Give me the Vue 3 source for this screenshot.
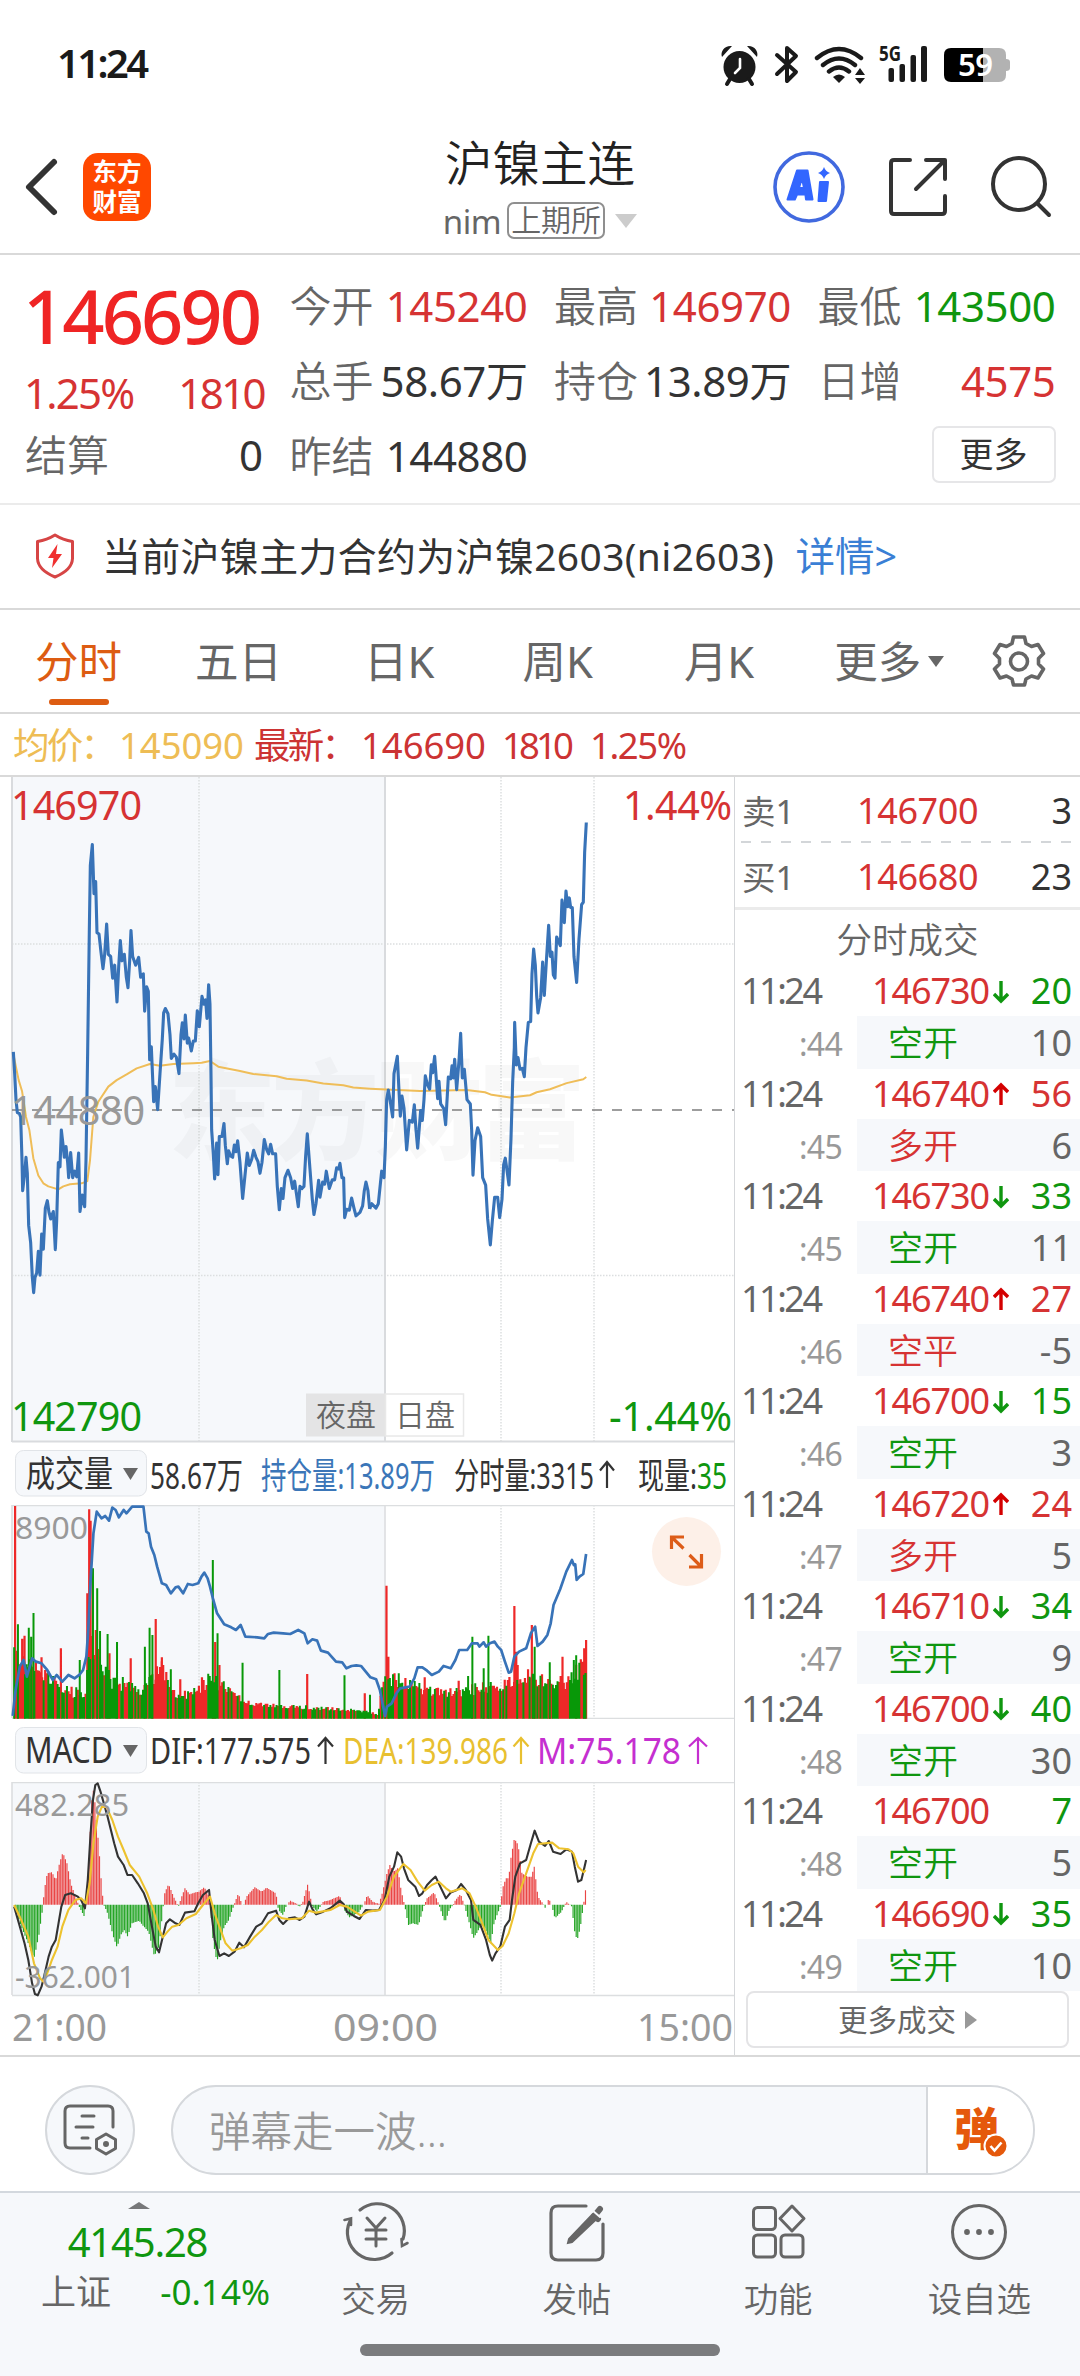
<script setup>
const quoteCols = [
  [
    { label: '今开', value: '145240', tone: 'red' },
    { label: '总手', value: '58.67万', tone: 'dark' },
    { label: '昨结', value: '144880', tone: 'dark' },
  ],
  [
    { label: '最高', value: '146970', tone: 'red' },
    { label: '持仓', value: '13.89万', tone: 'dark' },
  ],
  [
    { label: '最低', value: '143500', tone: 'green' },
    { label: '日增', value: '4575', tone: 'red' },
  ],
]

const trades = [
  { price: '146730', dir: 'down', vol: 20, sec: ':44', kind: '空开', kindTone: 'green', diff: 10 },
  { price: '146740', dir: 'up', vol: 56, sec: ':45', kind: '多开', kindTone: 'red', diff: 6 },
  { price: '146730', dir: 'down', vol: 33, sec: ':45', kind: '空开', kindTone: 'green', diff: 11 },
  { price: '146740', dir: 'up', vol: 27, sec: ':46', kind: '空平', kindTone: 'red', diff: -5 },
  { price: '146700', dir: 'down', vol: 15, sec: ':46', kind: '空开', kindTone: 'green', diff: 3 },
  { price: '146720', dir: 'up', vol: 24, sec: ':47', kind: '多开', kindTone: 'red', diff: 5 },
  { price: '146710', dir: 'down', vol: 34, sec: ':47', kind: '空开', kindTone: 'green', diff: 9 },
  { price: '146700', dir: 'down', vol: 40, sec: ':48', kind: '空开', kindTone: 'green', diff: 30 },
  { price: '146700', dir: '', vol: 7, sec: ':48', kind: '空开', kindTone: 'green', diff: 5 },
  { price: '146690', dir: 'down', vol: 35, sec: ':49', kind: '空开', kindTone: 'green', diff: 10 },
]

// night session / day session price polylines
const nightPrice = '40,650 44,700 48,760 52,790 58,792 62,800 66,900 68,970 74,930 78,893 82,930 86,1050 92,1090 97,1170 101,1205 105,1170 110,1160 115,1110 120,1165 125,1070 130,1105 136,1010 142,993 147,1020 152,1035 160,1018 166,1106 170,1040 175,905 180,915 184,830 190,870 193,893 198,868 203,905 206,940 212,882 218,940 224,925 230,938 236,883 240,1018 247,980 254,1007 258,900 263,650 268,370 271,220 277,172 282,285 287,257 291,375 297,378 303,420 309,458 314,425 320,355 325,425 332,430 338,480 344,450 351,535 356,455 361,393 366,440 373,425 379,478 384,502 389,440 393,370 398,430 407,450 416,432 422,478 430,470 434,556 440,500 445,510 449,668 454,638 461,765 466,730 473,783 480,700 487,620 491,560 496,550 504,562 510,610 514,665 522,655 529,662 537,700 543,610 547,583 552,620 556,565 562,630 566,618 574,648 580,625 586,625 592,555 598,592 606,522 612,540 617,530 621,573 626,495 630,540 633,700 635,830 640,885 644,943 650,860 654,933 658,845 666,845 672,815 676,865 682,908 686,878 692,890 698,893 703,865 708,880 713,855 720,905 728,988 735,935 742,883 748,912 755,898 761,877 768,893 774,903 780,930 786,905 793,852 800,875 806,885 812,863 818,885 827,885 832,960 838,1014 844,965 849,988 855,940 864,923 872,940 878,965 884,948 889,975 895,1007 900,960 906,965 912,960 917,890 922,839 930,920 937,990 942,1025 948,1000 956,946 960,985 968,950 974,955 979,925 988,965 997,945 1004,945 1010,917 1016,920 1020,907 1026,940 1031,940 1034,1032 1040,1013 1048,1015 1055,987 1062,1010 1068,1028 1080,1020 1088,1005 1093,970 1098,950 1104,970 1109,1012'
const dayPrice = '-1,1012 5,1000 18,1010 25,1000 35,925 42,940 46,870 50,760 55,738 62,770 68,800 72,700 82,660 87,740 91,798 96,752 102,780 110,876 118,808 127,812 133,772 138,830 143,872 152,785 157,808 162,760 166,705 172,725 179,736 184,680 188,698 194,660 203,758 207,718 212,770 221,780 227,818 235,708 242,712 246,682 250,710 254,667 260,737 267,670 272,607 277,710 283,690 291,760 301,770 305,830 309,934 315,855 323,825 332,845 338,940 347,957 353,1035 361,1095 367,1040 374,985 383,985 389,1032 396,990 401,910 406,895 417,957 423,850 428,720 433,640 434,582 439,680 444,663 450,690 457,688 463,707 468,640 475,582 482,580 486,470 491,413 496,450 500,520 504,560 512,525 518,443 523,520 530,430 536,358 541,430 546,420 550,472 555,480 560,385 571,405 576,300 583,352 588,279 593,315 598,295 602,317 607,317 612,430 620,490 627,390 635,310 640,305 644,190 649,121'
const nightAvg = '40,655 48,685 56,715 66,740 78,800 88,830 100,895 115,935 130,953 145,960 175,967 190,960 210,955 245,953 262,948 270,900 280,800 295,765 325,730 350,715 380,702 410,688 450,678 480,682 520,678 580,676 605,675 630,671 655,684 720,694 760,701 830,706 860,712 920,716 970,723 1030,727 1060,732 1110,735'
const dayAvg = '0,735 150,740 290,738 345,743 365,749 420,755 480,750 500,743 540,736 590,722 640,713 649,708'

const openInterest = '27,858 33,780 42,710 50,690 57,740 68,685 76,695 88,700 100,720 112,750 120,735 132,755 145,735 158,745 168,735 176,720 183,680 187,600 192,450 198,310 205,245 215,265 223,258 231,272 238,233 245,240 252,262 262,240 268,250 280,230 290,230 304,230 310,305 315,310 320,350 327,375 333,410 343,460 352,465 362,490 372,472 378,470 388,490 398,462 408,465 420,460 427,440 433,428 440,445 445,470 452,510 460,550 475,583 490,592 500,600 510,585 520,620 545,622 560,625 568,612 580,608 600,610 615,612 632,600 645,610 652,640 662,628 672,632 680,662 695,668 712,695 725,697 734,715 745,708 755,706 765,708 775,725 785,742 797,748 805,780 812,830 816,858 820,830 830,820 840,790 848,775 868,770 878,745 885,712 895,712 905,722 915,735 930,725 940,708 955,715 965,690 973,660 990,660 1000,640 1012,640 1016,650 1025,637 1030,650 1038,640 1048,635 1055,650 1062,660 1070,695 1078,728 1083,725 1090,680 1100,665 1115,655 1125,610 1134,590 1139,648 1150,635 1160,615 1167,580 1173,525 1187,478 1200,425 1212,390 1216,405 1219,403 1222,450 1228,440 1236,432 1242,372'

const dif = '30,590 40,640 52,700 60,750 68,820 74,852 80,856 88,830 95,790 103,740 110,710 118,690 124,640 130,590 138,555 150,550 165,560 172,570 180,595 186,510 192,370 197,270 202,225 207,220 213,245 220,280 228,320 235,360 242,400 250,440 262,465 270,495 280,495 292,520 305,550 313,580 322,650 330,710 337,727 345,680 352,640 360,628 372,640 380,645 392,608 412,604 420,580 430,555 443,540 448,610 455,690 465,738 475,730 485,738 497,725 507,698 517,712 530,680 543,650 555,640 568,610 585,602 592,630 600,642 612,625 625,622 635,630 645,620 655,575 663,600 670,613 685,605 700,595 720,572 728,582 735,605 750,618 762,627 775,600 790,602 803,600 815,570 825,500 835,470 842,427 850,440 856,475 865,510 880,530 888,558 895,550 905,525 915,510 923,500 933,530 945,565 955,548 968,540 977,522 987,540 998,570 1003,630 1018,645 1030,690 1038,735 1043,752 1050,730 1060,710 1070,650 1080,630 1085,570 1092,500 1102,460 1115,450 1125,400 1133,362 1142,395 1155,408 1163,393 1172,425 1188,432 1200,418 1212,425 1218,470 1225,515 1232,510 1238,475 1242,450'
const dea = '30,585 45,630 60,680 72,760 85,805 92,815 100,790 110,750 122,710 132,650 145,600 160,570 172,565 182,580 190,520 198,400 207,320 216,290 226,292 238,330 250,380 262,420 275,465 295,500 312,550 325,600 335,650 345,682 355,665 365,650 378,645 395,625 415,612 430,585 445,560 455,610 465,650 478,700 492,722 510,715 525,705 540,680 555,660 570,635 585,615 598,625 612,628 640,625 655,602 670,608 700,600 720,585 735,590 765,617 780,605 805,600 820,560 835,500 855,462 870,480 885,515 900,542 915,525 930,515 945,535 955,545 980,535 995,550 1008,590 1022,640 1035,690 1055,720 1065,708 1078,670 1090,610 1100,550 1115,490 1130,430 1140,402 1170,398 1185,415 1205,418 1215,430 1225,470 1237,487 1241,480'
const macdProfile = '30,584 45,650 60,700 72,745 82,680 90,600 94,540 100,490 110,487 118,510 126,460 133,428 142,460 150,520 160,560 168,590 178,618 184,560 190,400 196,228 200,260 205,340 210,420 216,540 220,584 228,610 240,680 248,712 256,675 264,660 270,680 280,640 295,632 305,650 315,665 327,738 337,710 345,600 349,550 357,522 368,560 378,590 385,560 392,535 402,553 412,548 422,545 432,532 440,545 446,590 452,700 460,757 466,700 475,650 485,630 495,588 505,550 512,580 516,590 522,560 540,532 555,545 565,533 585,550 590,600 600,615 606,590 615,572 630,582 634,592 642,575 652,523 662,590 672,605 685,575 700,570 720,558 730,600 740,622 760,608 772,580 778,556 790,575 803,582 810,550 820,490 826,465 834,485 843,475 850,540 858,590 865,645 875,640 887,645 898,590 905,565 920,547 930,584 935,605 943,638 952,600 960,585 965,570 976,552 985,590 1003,685 1012,665 1022,640 1032,670 1040,700 1047,640 1060,590 1066,530 1072,505 1078,505 1083,440 1090,385 1098,405 1106,490 1118,500 1126,500 1132,468 1140,560 1150,580 1156,595 1163,565 1170,590 1176,625 1190,605 1200,575 1212,590 1217,660 1223,692 1230,650 1236,590 1242,528'
const volProfile = '28,650 60,680 90,700 120,750 150,770 180,770 195,600 215,680 240,740 270,740 300,780 320,720 345,690 370,780 400,780 440,730 470,740 500,790 540,810 580,820 640,825 700,830 760,835 800,850 815,720 850,735 900,760 950,775 1000,760 1050,750 1100,710 1140,730 1200,740 1243,660'
const volSpikes = [
  [32, 228, 'r'], [38, 583, 'g'], [47, 626, 'r'], [52, 617, 'r'], [61, 593, 'g'], [66, 620, 'g'], [71, 549, 'g'], [88, 682, 'r'], [129, 655, 'r'], [169, 690, 'g'],
  [185, 490, 'r'], [189, 238, 'r'], [192, 272, 'r'], [197, 415, 'g'], [203, 600, 'r'], [206, 475, 'g'], [212, 603, 'g'], [228, 612, 'g'],
  [232, 670, 'r'], [248, 636, 'g'], [277, 685, 'r'], [307, 650, 'g'], [317, 593, 'g'], [323, 615, 'g'], [330, 567, 'r'], [343, 682, 'r'],
  [362, 718, 'g'], [382, 748, 'r'], [428, 742, 'r'], [451, 390, 'g'], [456, 636, 'r'], [461, 610, 'g'], [465, 705, 'r'], [514, 698, 'g'],
  [592, 720, 'g'], [651, 732, 'r'], [730, 736, 'g'], [773, 790, 'r'], [784, 794, 'g'], [819, 467, 'r'], [823, 680, 'r'], [836, 730, 'r'],
  [845, 730, 'g'], [900, 742, 'r'], [972, 752, 'r'], [992, 738, 'g'], [1001, 620, 'g'], [1025, 715, 'g'], [1035, 617, 'g'], [1090, 528, 'r'],
  [1094, 665, 'r'], [1097, 705, 'r'], [1119, 718, 'r'], [1127, 585, 'r'], [1133, 650, 'g'], [1165, 697, 'g'], [1192, 680, 'r'],
  [1216, 690, 'g'], [1221, 676, 'g'], [1238, 655, 'r'], [1242, 630, 'r'],
]

const parse = str => str.split(' ').map(p => p.split(',').map(Number))

function sample(points, x) {
  const i = points.findIndex(p => p[0] >= x)
  if (i <= 0) return points[i === 0 ? 0 : points.length - 1][1]
  const [x0, y0] = points[i - 1]
  const [x1, y1] = points[i]
  return y0 + (y1 - y0) * (x - x0) / (x1 - x0)
}

let seed = 17
function rand() {
  seed = (seed * 16807) % 2147483647
  return seed / 2147483647
}

const profile = parse(volProfile)
const volBars = { r: '', g: '' }
for (let x = 30; x <= 1244; x += 3.29) {
  const top = sample(profile, x)
  const y = top + (866 - top) * (rand() * 0.34)
  volBars[rand() > 0.45 ? 'r' : 'g'] += `M${x.toFixed(1)} 866V${y.toFixed(0)}`
}
volSpikes.forEach(([x, y, c]) => { volBars[c] += `M${x} 866V${y}` })

const macd = parse(macdProfile)
const macdBars = { r: '', g: '' }
for (let x = 30; x <= 1243; x += 3.29) {
  const y = sample(macd, x)
  macdBars[y < 584 ? 'r' : 'g'] += `M${x.toFixed(1)} 584V${y.toFixed(0)}`
}
</script>

<template>
  <div class="page">
    <div class="status">
      <span class="clock">11:24</span>
      <svg width="300" height="50" viewBox="715 40 300 50">
        <g fill="#1a1a1a">
          <circle cx="739.5" cy="67" r="16" />
          <path d="M722 57c-2-6 3-12 10-11zM757 57c2-6-3-12-10-11z" />
          <path d="M730 79l-3 5M749 79l3 5" stroke="#1a1a1a" stroke-width="4" stroke-linecap="round" />
          <path d="M740 59v9l-5 5" fill="none" stroke="#fff" stroke-width="2.6" stroke-linecap="round" />
        </g>
        <path d="M777 55l19 17-9 9V48l9 8-19 18" fill="none" stroke="#1a1a1a" stroke-width="4" stroke-linejoin="round" stroke-linecap="round" />
        <g fill="none" stroke="#1a1a1a" stroke-width="4.4" stroke-linecap="round">
          <path d="M817 58q22-18 44 0M823 65q16-13 32 0M829 71.500q10-8 20 0" />
        </g>
        <path d="M833 77q6-5 12 0l-6 6z" fill="#1a1a1a" />
        <path d="M855 75l5-7 5 7zM855 78l5 6 5-6z" fill="#1a1a1a" />
        <text class="net" x="879" y="61" textLength="22" lengthAdjust="spacingAndGlyphs">5G</text>
        <g fill="#1a1a1a">
          <rect x="888.500" y="68" width="5.500" height="14" rx="2" />
          <rect x="899.500" y="64" width="5.500" height="18" rx="2" />
          <rect x="910.500" y="55" width="5.500" height="27" rx="2" />
          <rect x="921" y="46" width="6" height="36" rx="2" />
        </g>
        <path d="M951 48h32v34h-32q-7 0-7-7v-20q0-7 7-7z" fill="#000" />
        <path d="M983 48h16q7 0 7 7v4q4 0 4 3v6q0 3-4 3v4q0 7-7 7h-16z" fill="#b2b2b2" />
        <text class="charge" x="958" y="76" textLength="35">59</text>
      </svg>
    </div>

    <header class="header">
      <div class="head-left">
        <svg width="36" height="60" viewBox="0 0 36 60"><path d="M31 5L6 30 31 55" fill="none" stroke="#333" stroke-width="6" stroke-linecap="round" stroke-linejoin="round" /></svg>
        <div class="logo"><span>东方</span><span>财富</span></div>
      </div>
      <div class="head-title">
        <h1>沪镍主连</h1>
        <div class="sub"><span>nim</span><b>上期所</b><i /></div>
      </div>
      <div class="head-right">
        <svg width="74" height="74" viewBox="0 0 74 74">
          <circle cx="37" cy="37" r="34" fill="none" stroke="#4169df" stroke-width="3.600" />
          <path fill="#3366ff" fill-rule="evenodd" stroke="#3366ff" stroke-width="2" stroke-linejoin="round" d="M25 20.500h10.500l5 29H34l-.6-5H25l-2.200 5H15.500zM30 28l-3 10h5z" />
          <path fill="#3366ff" stroke="#3366ff" stroke-width="2" stroke-linejoin="round" d="M48 32h8l-2 19h-7.500z" />
          <path fill="#3366ff" d="M52 17q1.500 4.500 6 6-4.500 1.500-6 6-1.500-4.500-6-6 4.500-1.500 6-6z" />
        </svg>
        <svg width="60" height="60" viewBox="0 0 60 60" fill="none" stroke="#333" stroke-width="4" stroke-linecap="round" stroke-linejoin="round">
          <path d="M22 3H6Q3 3 3 6v48q0 3 3 3h48q3 0 3-3V39M57 22V3H38M56 4L28 32" />
        </svg>
        <svg width="62" height="64" viewBox="0 0 62 64" fill="none" stroke="#333" stroke-width="4" stroke-linecap="round">
          <circle cx="29" cy="29" r="26" /><path d="M48 49l11 11" />
        </svg>
      </div>
    </header>

    <section class="quote">
      <div class="quote-main">
        <div class="last">146690</div>
        <div class="chg red"><span>1.25%</span><span>1810</span></div>
        <div class="settle"><span class="label">结算</span><span class="dark">0</span></div>
      </div>
      <div v-for="(col, i) in quoteCols" :key="i" class="quote-col">
        <div v-for="item in col" :key="item.label" class="quote-item">
          <span class="label">{{ item.label }}</span><span :class="item.tone">{{ item.value }}</span>
        </div>
        <button v-if="i === 2" class="more-btn">更多</button>
      </div>
    </section>

    <section class="notice">
      <svg width="42" height="48" viewBox="0 0 42 48">
        <path d="M21 3q8 5 17.500 6.500v17Q38 38 21 45 4 38 3.500 26.500v-17Q13 8 21 3z" fill="none" stroke="#d64545" stroke-width="3" stroke-linejoin="round" />
        <path d="M23.500 12L14 26h5.500L18 36l10-14h-6z" fill="#f03030" />
      </svg>
      <span class="notice-text">当前沪镍主力合约为沪镍2603(ni2603)</span>
      <a>详情&gt;</a>
    </section>

    <nav class="tabs">
      <span class="tab active">分时</span>
      <span class="tab">五日</span>
      <span class="tab">日K</span>
      <span class="tab">周K</span>
      <span class="tab">月K</span>
      <span class="tab tab-more">更多<i /></span>
      <svg class="gear" width="54" height="54" viewBox="0 0 54 54" fill="none" stroke="#666" stroke-width="3.600" stroke-linejoin="round">
        <path d="M21.500 3h11l1.500 6.500 5.500 3 6.500-2 5.500 9-5 5v5.500l5 5-5.500 9-6.500-2-5.500 3L32.500 51h-11L20 45l-5.500-3-6.500 2-5.500-9 5-5v-5.500l-5-5L8 10.500l6.500 2 5.500-3z" />
        <circle cx="27" cy="27.500" r="8.500" />
      </svg>
    </nav>

    <div class="legend">
      <svg width="720" height="61" viewBox="0 714 720 61">
        <g fill="#eebd55">
          <text x="13" y="759" textLength="104">均价：</text>
          <text x="119" y="759" textLength="125">145090</text>
        </g>
        <g fill="#cc3333">
          <text x="254" y="759" textLength="104">最新：</text>
          <text x="361" y="759" textLength="125">146690</text>
          <text x="502" y="759" textLength="72">1810</text>
          <text x="590" y="759" textLength="97">1.25%</text>
        </g>
      </svg>
    </div>

    <div class="board">
      <div class="charts">
        <svg class="block" width="734" height="666" viewBox="0 777 734 666">
          <rect x="12" y="777" width="373" height="665" fill="#f6f8fb" />
          <g class="grid">
            <path d="M12 944H734M12 1275.500H734M199 777V1441M501 777V1441M594 777V1441" stroke-dasharray="1.500 1.500" />
          </g>
          <path d="M12 777V1442M385 777V1442M12 1441.500H734" fill="none" stroke="#d9dbde" stroke-width="2" />
          <text class="mark" x="168" y="1151" textLength="418">东方财富</text>
          <path d="M12 1110H734" stroke="#7d7d7d" stroke-width="1.700" stroke-dasharray="10 10" />
          <g class="line">
            <g transform="translate(0 770) scale(.3333 .4337)">
              <polyline :points="nightAvg" stroke="#efbd58" stroke-width="2" />
              <polyline :points="nightPrice" stroke="#3873b8" stroke-width="3.100" />
            </g>
            <g transform="translate(370 770) scale(.3333 .4337)">
              <polyline :points="dayAvg" stroke="#efbd58" stroke-width="2" />
              <polyline :points="dayPrice" stroke="#3873b8" stroke-width="3.100" />
            </g>
          </g>
          <g class="axis">
            <text x="11" y="819.500" textLength="131" fill="#d63333">146970</text>
            <text x="623" y="819.500" textLength="109" fill="#d63333">1.44%</text>
            <text x="11" y="1125" textLength="134" fill="#999">144880</text>
            <text x="11" y="1431" textLength="131" fill="#0f960f">142790</text>
            <text x="609" y="1431" textLength="123" fill="#0f960f">-1.44%</text>
          </g>
          <rect x="306" y="1393.500" width="79" height="43" fill="#e4e4e5" />
          <rect x="385.500" y="1394" width="78" height="42" fill="#fff" stroke="#e8e8e8" stroke-width="1.500" />
          <text class="session" x="316" y="1425.500" textLength="60">夜盘</text>
          <text class="session" x="395" y="1425.500" textLength="60">日盘</text>
        </svg>

        <svg class="block ind" width="734" height="62" viewBox="0 1443 734 62">
          <rect x="15.500" y="1450.500" width="131" height="45.500" rx="8" fill="#f6f8fb" stroke="#e1e4e8" />
          <text x="26" y="1487" textLength="87" lengthAdjust="spacingAndGlyphs">成交量</text>
          <path d="M123 1468h15l-7.500 12z" fill="#666" />
          <text x="150" y="1488.500" textLength="93" lengthAdjust="spacingAndGlyphs">58.67万</text>
          <text x="261" y="1488.500" textLength="174" lengthAdjust="spacingAndGlyphs" fill="#3b76b8">持仓量:13.89万</text>
          <text x="454" y="1488.500" textLength="140" lengthAdjust="spacingAndGlyphs">分时量:3315</text>
          <path class="arrow" d="M607 1488V1462M600 1470.500l7-8.500 7 8.500" stroke="#333" />
          <text x="638" y="1488.500" textLength="59" lengthAdjust="spacingAndGlyphs">现量:</text>
          <text x="697" y="1488.500" textLength="30" lengthAdjust="spacingAndGlyphs" fill="#0f960f">35</text>
        </svg>

        <svg class="block" width="734" height="214" viewBox="0 1505 734 214">
          <rect x="12" y="1505" width="373" height="213" fill="#f6f8fb" />
          <g class="grid"><path d="M199 1505V1718M501 1505V1718M594 1505V1718" stroke-dasharray="1.500 1.500" /></g>
          <path d="M734 1505.500H12V1718M385 1505V1718M12 1718.500H734" fill="none" stroke="#dcdee0" stroke-width="1.600" />
          <text class="tick" x="15" y="1538.500" textLength="73" lengthAdjust="spacingAndGlyphs">8900</text>
          <g transform="translate(0 1430) scale(.4719 .3333)" class="line">
            <path :d="volBars.r" stroke="#ee2828" stroke-width="2.200" />
            <path :d="volBars.g" stroke="#089808" stroke-width="2" />
            <polyline :points="openInterest" stroke="#3873b8" stroke-width="2.700" />
          </g>
          <circle cx="686.500" cy="1551.500" r="34.500" fill="#fdf0e8" />
          <path d="M671.500 1549V1537H684M672.500 1538l11 10.500M701.500 1554V1567H689M700.500 1566l-11-11" fill="none" stroke="#dd5c18" stroke-width="3.200" />
        </svg>

        <svg class="block ind" width="734" height="63" viewBox="0 1719 734 63">
          <rect x="15.500" y="1727.500" width="131" height="45.500" rx="8" fill="#f6f8fb" stroke="#e1e4e8" />
          <text x="25" y="1763" textLength="88" lengthAdjust="spacingAndGlyphs">MACD</text>
          <path d="M123 1745h15l-7.500 12z" fill="#666" />
          <text x="150" y="1763.500" textLength="161" lengthAdjust="spacingAndGlyphs">DIF:177.575</text>
          <path class="arrow" d="M325.500 1764V1738M318 1746.500l7.500-8.500 7.500 8.500" stroke="#333" />
          <g fill="#e8c030">
            <text x="343" y="1763.500" textLength="165" lengthAdjust="spacingAndGlyphs">DEA:139.986</text>
            <path class="arrow" d="M521 1764V1738M513.500 1746.500l7.500-8.500 7.500 8.500" stroke="#e8c030" />
          </g>
          <g fill="#c52fd0">
            <text x="537" y="1763.500" textLength="144" lengthAdjust="spacingAndGlyphs">M:75.178</text>
            <path class="arrow" d="M698 1764V1738M689 1746.500l9-8.500 9 8.500" stroke="#c52fd0" />
          </g>
        </svg>

        <svg class="block" width="734" height="274" viewBox="0 1782 734 274">
          <rect x="12" y="1782" width="373" height="213" fill="#f6f8fb" />
          <g class="grid"><path d="M199 1782V1995M501 1782V1995M594 1782V1995" stroke-dasharray="1.500 1.500" /></g>
          <path d="M734 1782.500H12V1995M385 1782V1995M12 1995.500H734" fill="none" stroke="#dcdee0" stroke-width="1.600" />
          <g transform="translate(0 1710) scale(.4719 .3333)" class="line">
            <path :d="macdBars.r" stroke="#ea4545" stroke-width="1.150" />
            <path :d="macdBars.g" stroke="#25a525" stroke-width="1.150" />
            <polyline :points="dif" stroke="#333" stroke-width="2.100" />
            <polyline :points="dea" stroke="#edc22e" stroke-width="2.100" />
          </g>
          <text class="tick" x="15" y="1815.500" textLength="114" lengthAdjust="spacingAndGlyphs">482.285</text>
          <text class="tick" x="15" y="1988" textLength="120" lengthAdjust="spacingAndGlyphs">-362.001</text>
          <g class="times">
            <text x="12" y="2041" textLength="95" lengthAdjust="spacingAndGlyphs">21:00</text>
            <text x="333" y="2041" textLength="105" lengthAdjust="spacingAndGlyphs">09:00</text>
            <text x="637" y="2041" textLength="96" lengthAdjust="spacingAndGlyphs">15:00</text>
          </g>
        </svg>
      </div>

      <aside class="side">
        <div class="level ask"><span class="lv">卖1</span><span class="lp red">146700</span><span class="dark">3</span></div>
        <svg class="dash" width="332" height="2"><path d="M0 1H332" stroke="#d3d6d9" stroke-width="2" stroke-dasharray="10 10" /></svg>
        <div class="level bid"><span class="lv">买1</span><span class="lp red">146680</span><span class="dark">23</span></div>
        <div class="side-title">分时成交</div>
        <div v-for="(t, i) in trades" :key="i" class="trade">
          <div class="trade-top">
            <span class="tt">11:24</span>
            <span class="tp red">{{ t.price }}</span>
            <svg v-if="t.dir" class="dir" width="16" height="24" viewBox="0 0 16 24" fill="none" stroke-width="3.400">
              <path v-if="t.dir === 'down'" d="M8 1v19M1 14l7 7 7-7" stroke="#0f960f" />
              <path v-else d="M8 23V4M1 10l7-7 7 7" stroke="#d40000" />
            </svg>
            <span class="tv" :class="t.dir === 'up' ? 'red' : 'green'">{{ t.vol }}</span>
          </div>
          <div class="trade-sub">
            <span class="ts">{{ t.sec }}</span>
            <div class="tk"><span class="kind" :class="t.kindTone">{{ t.kind }}</span><span class="td">{{ t.diff }}</span></div>
          </div>
        </div>
        <button class="more-trades">更多成交<i /></button>
      </aside>
    </div>

    <section class="danmu">
      <div class="danmu-set">
        <svg width="56" height="56" viewBox="0 0 56 56" fill="none" stroke="#666" stroke-width="3" stroke-linecap="round" stroke-linejoin="round">
          <path d="M28 46H8q-5 0-5-5V9q0-5 5-5h38q5 0 5 5v16M20 14h12M14 25h17M20 36h6" />
          <path d="M44 32l9.500 5.500v9L44 52l-9.500-5.500v-9z" /><circle cx="44" cy="42" r="1.500" fill="#666" />
        </svg>
      </div>
      <div class="danmu-box">
        <span class="danmu-hint">弹幕走一波...</span>
        <div class="danmu-on">
          <span>弹</span>
          <svg width="26" height="26" viewBox="0 0 26 26"><circle cx="13" cy="13" r="11.500" fill="#e5590c" stroke="#fff" stroke-width="2" /><path d="M7.500 13l4 4.500 7-8" fill="none" stroke="#fff" stroke-width="2.600" /></svg>
        </div>
      </div>
    </section>

    <footer class="bottom">
      <div class="bar">
        <div class="index">
          <i />
          <div class="index-val">4145.28</div>
          <div class="index-row"><span>上证</span><span class="green">-0.14%</span></div>
        </div>
        <div class="bar-item">
          <svg width="66" height="62" viewBox="0 0 66 62" fill="none" stroke="#666" stroke-width="3.200" stroke-linecap="round">
            <path d="M17 9A27 27 0 0 1 60 38M49 52A27 27 0 0 1 7 20" />
            <path d="M1.500 19L8 17.500 8 24M64.500 42L59 45 58.500 38" stroke-width="2.600" />
            <path d="M24 17l9 10 9-10M33 27v18M23 29h20M23 38h20" stroke-width="3" />
          </svg>
          <span>交易</span>
        </div>
        <div class="bar-item">
          <svg width="62" height="62" viewBox="0 0 62 62" fill="none" stroke="#666" stroke-width="3.200" stroke-linecap="round">
            <path d="M40 5H12q-7 0-7 7v40q0 7 7 7h38q7 0 7-7V23" />
            <path d="M49 14l5-6M48 15l4 3" stroke-width="6" /><path d="M46.500 13.500L51 17.500 26 41l-4 1 1-4z" fill="#666" stroke-width="2" />
            <path d="M46 9l8 7" stroke="#f6f8fb" stroke-width="2" />
          </svg>
          <span>发帖</span>
        </div>
        <div class="bar-item">
          <svg width="62" height="62" viewBox="0 0 62 62" fill="none" stroke="#666" stroke-width="3" stroke-linejoin="round">
            <rect x="6.500" y="6.500" width="22" height="22" rx="4" /><rect x="6.500" y="34" width="22" height="22" rx="4" />
            <rect x="34" y="34" width="22" height="22" rx="4" /><path d="M45 5l12 12.500L45 30 33 17.500z" />
          </svg>
          <span>功能</span>
        </div>
        <div class="bar-item">
          <svg width="62" height="62" viewBox="0 0 62 62">
            <circle cx="31" cy="31" r="26.500" fill="none" stroke="#666" stroke-width="3" />
            <g fill="#666"><circle cx="19" cy="31" r="2.900" /><circle cx="31" cy="31" r="2.900" /><circle cx="43" cy="31" r="2.900" /></g>
          </svg>
          <span>设自选</span>
        </div>
      </div>
      <div class="home" />
    </footer>
  </div>
</template>

<style scoped>
.page {
  width: 1080px;
  height: 2376px;
  overflow: hidden;
  background: #fff;
  color: #666;
  font-family: "Noto Sans", "Noto Sans CJK SC", sans-serif;
  font-size: 42px;
  font-weight: 400;
  line-height: 1;
}
.page * { box-sizing: border-box; }
svg { display: block; flex-shrink: 0; }
button { font: inherit; background: none; padding: 0; }
i { display: inline-block; }
.red { color: #d63333; }
.green { color: #0f960f; }
.dark { color: #333; }
.label { color: #666; }
.label, .kind, .side-title, .bar-item, .danmu-hint { font-weight: 350; }

.status {
  height: 127px;
  padding: 40px 65px 0 57px;
  display: flex;
  justify-content: space-between;
}
.clock {
  font-size: 40px;
  font-weight: 600;
  line-height: 46px;
  letter-spacing: -2.600px;
  color: #1a1a1a;
}
.net { font-size: 21px; font-weight: 700; fill: #1a1a1a; }
.charge { font-size: 31px; font-weight: 600; fill: #fff; }

.header {
  height: 128px;
  border-bottom: 2px solid #d9d9d9;
  display: grid;
  grid-template-columns: 1fr auto 1fr;
}
.head-left, .head-right { display: flex; align-items: center; padding-bottom: 6px; }
.head-left { padding-left: 23px; gap: 24px; }
.head-right { justify-content: flex-end; gap: 42px; padding-right: 28px; }
.logo {
  width: 68px;
  height: 68px;
  border-radius: 15px;
  background: #ff4800;
  color: #fff;
  font-size: 24.500px;
  font-weight: 700;
  line-height: 30px;
  display: flex;
  flex-direction: column;
  align-items: center;
  padding-top: 4px;
}
.head-title { display: flex; flex-direction: column; align-items: center; padding-top: 10px; }
h1 { margin: 0; font-size: 47.500px; line-height: 52px; font-weight: 350; color: #222; }
.sub { display: flex; align-items: center; margin-top: 13px; font-size: 33px; line-height: 36px; }
.sub span { position: relative; top: 1px; letter-spacing: -0.500px; }
.sub b {
  margin-left: 6px;
  border: 2px solid #8f8f8f;
  border-radius: 7px;
  height: 37px;
  width: 98px;
  text-align: center;
  font-size: 30px;
  font-weight: 350;
  line-height: 32px;
}
.sub i {
  margin-left: 10px;
  border: 11px solid transparent;
  border-top: 14px solid #ccc;
  border-bottom: 0;
}

.quote {
  height: 250px;
  padding: 12px 0 0 25px;
  display: grid;
  grid-template-columns: 238px 238px 237px 238px;
  column-gap: 26.500px;
  border-bottom: 2px solid #ebebeb;
}
.last { height: 96px; line-height: 98px; font-size: 74px; font-weight: 500; color: #ef2424; letter-spacing: -3px; margin-left: -2px; white-space: nowrap; }
.chg { height: 58px; line-height: 60px; display: flex; justify-content: space-between; letter-spacing: -1.800px; margin-left: -1px; }
.chg span:last-child { margin-right: -1px; letter-spacing: -2.600px; }
.settle { height: 65px; line-height: 67px; display: flex; justify-content: space-between; }
.quote-item { height: 75px; line-height: 77px; display: flex; justify-content: space-between; white-space: nowrap; }
.quote-item span:last-child { letter-spacing: -0.400px; }
.more-btn {
  display: block;
  margin: 9px 0 0 auto;
  width: 124px;
  height: 57px;
  border: 2px solid #e6e6e8;
  border-radius: 7px;
  font-size: 34px;
  line-height: 51px;
  color: #333;
}

.notice {
  height: 105px;
  border-bottom: 2px solid #d9d9d9;
  padding: 0 0 2px 34px;
  display: flex;
  align-items: center;
  font-size: 38.900px;
  color: #333;
}
.notice-text { margin-left: 26px; position: relative; top: 1px; letter-spacing: 0.400px; }
.notice a { margin-left: 21px; color: #3a7fd5; font-size: 39.500px; position: relative; top: 1px; }

.tabs {
  height: 104px;
  border-bottom: 2px solid #d9d9d9;
  padding-left: 35px;
  display: flex;
  align-items: center;
  font-size: 43.500px;
}
.tab { position: relative; margin-right: 73px; line-height: 105px; height: 104px; }
.tab:nth-child(2) { margin-right: 82px; }
.tab:nth-child(3) { margin-right: 88px; }
.tab:nth-child(4) { margin-right: 91px; }
.tab:nth-child(5) { margin-right: 80px; }
.tab.tab-more { margin-right: 0; }
.tab.active { color: #dd5c12; }
.tab.active::after {
  content: "";
  position: absolute;
  left: 14px;
  bottom: 8px;
  width: 60px;
  height: 6px;
  border-radius: 3px;
  background: #dd5c12;
}
.tab-more i { margin-left: 7px; border: 8px solid transparent; border-top: 11px solid #666; border-bottom: 0; vertical-align: 11px; }
.gear { margin-left: auto; margin-right: 34px; margin-bottom: 1px; }

.legend { height: 63px; border-bottom: 2px solid #d9d9d9; }
.legend text { font-size: 36.500px; }

.board { display: flex; height: 1280px; border-bottom: 2px solid #d9d9d9; }
.charts { width: 735px; border-right: 1.500px solid #d5d7da; }
.grid { fill: none; stroke: #dcdee0; stroke-width: 1.500; }
.line { fill: none; }
.line * { vector-effect: non-scaling-stroke; }
.line polyline { stroke-linejoin: round; }
.mark { font-size: 108px; font-weight: 800; fill: rgba(0, 0, 0, 0.028); }
.axis text { font-size: 39.500px; }
.session { font-size: 30px; font-weight: 350; fill: #666; }
.ind text { font-size: 36px; }
.ind { fill: #333; }
.arrow { fill: none; stroke-width: 2.200; }
.tick { font-size: 30px; fill: #999; }
.times text { font-size: 38px; fill: #999; }

.side { width: 345px; font-size: 36px; }
.level { display: flex; padding: 0 8px 0 7px; height: 64px; line-height: 68px; }
.lv { width: 115px; font-size: 33.500px; }
.lp { flex: 1; letter-spacing: -0.400px; }
.dash { margin-left: 6px; }
.bid { height: 67px; line-height: 68px; border-bottom: 3px solid #ebebeb; }
.side-title { height: 56px; line-height: 58px; text-align: center; font-size: 35.500px; }
.trade { height: 102.500px; }
.trade-top { display: flex; align-items: center; height: 50px; line-height: 52px; padding: 0 8px 0 6px; }
.tt { width: 131px; letter-spacing: -2.500px; }
.tp { letter-spacing: -1.100px; }
.dir { margin: 1px 0 0 4px; }
.tv { margin-left: auto; }
.trade-sub { display: flex; height: 52.500px; line-height: 53px; }
.ts { width: 107px; text-align: right; font-size: 32px; line-height: 56px; color: #999; letter-spacing: -0.700px; }
.tk { margin-left: 15px; flex: 1; background: #f6f8fb; padding: 0 8px 0 31px; display: flex; justify-content: space-between; }
.kind { font-size: 35px; }
.td { color: #666; }
.more-trades {
  display: flex;
  align-items: center;
  justify-content: center;
  width: 323px;
  height: 57px;
  margin-left: 11px;
  border: 2px solid #e4e4e6;
  border-radius: 8px;
  font-size: 29.500px;
  color: #666;
}
.more-trades i { margin: 1px 0 0 9px; border: 9px solid transparent; border-left: 12px solid #999; border-right: 0; }

.danmu { height: 134px; padding: 28px 45px 0; display: flex; gap: 36px; }
.danmu-set {
  width: 90px;
  height: 90px;
  border: 2px solid #d5d8dc;
  border-radius: 50%;
  background: #f6f8fb;
  display: flex;
  align-items: center;
  justify-content: center;
}
.danmu-box {
  width: 864px;
  height: 90px;
  border: 2px solid #d5d8dc;
  border-radius: 45px;
  background: #f6f8fb;
  overflow: hidden;
  display: flex;
  justify-content: space-between;
}
.danmu-hint { padding-left: 36px; line-height: 89px; font-size: 41.500px; color: #999; }
.danmu-on {
  position: relative;
  width: 107px;
  border-left: 2px solid #d5d8dc;
  background: #fff;
  padding-left: 26px;
  font-size: 45px;
  font-weight: 800;
  line-height: 84px;
  color: #e5590c;
}
.danmu-on svg { position: absolute; left: 55px; top: 46px; }

.bottom { height: 185px; background: #f6f8fb; border-top: 2px solid #d3d8de; }
.bar { display: flex; height: 151px; }
.index { width: 275px; position: relative; }
.index > i { position: absolute; left: 128px; top: 9px; border: 11px solid transparent; border-bottom: 7px solid #77787a; border-top: 0; }
.index-val { margin-top: 23px; text-align: center; font-size: 40px; line-height: 52px; letter-spacing: -1.200px; color: #0f960f; }
.index-row { display: flex; justify-content: space-between; padding: 0 5px 0 41px; font-size: 35px; line-height: 48px; }
.bar-item { flex: 1; display: flex; flex-direction: column; align-items: center; padding-top: 8px; }
.bar-item span { margin-top: 14px; font-size: 34.500px; line-height: 44px; }
.home { width: 360px; height: 12px; margin: 0 auto; border-radius: 6px; background: #7b7c7e; }
</style>

<style>
body { background: #fff; }
</style>
